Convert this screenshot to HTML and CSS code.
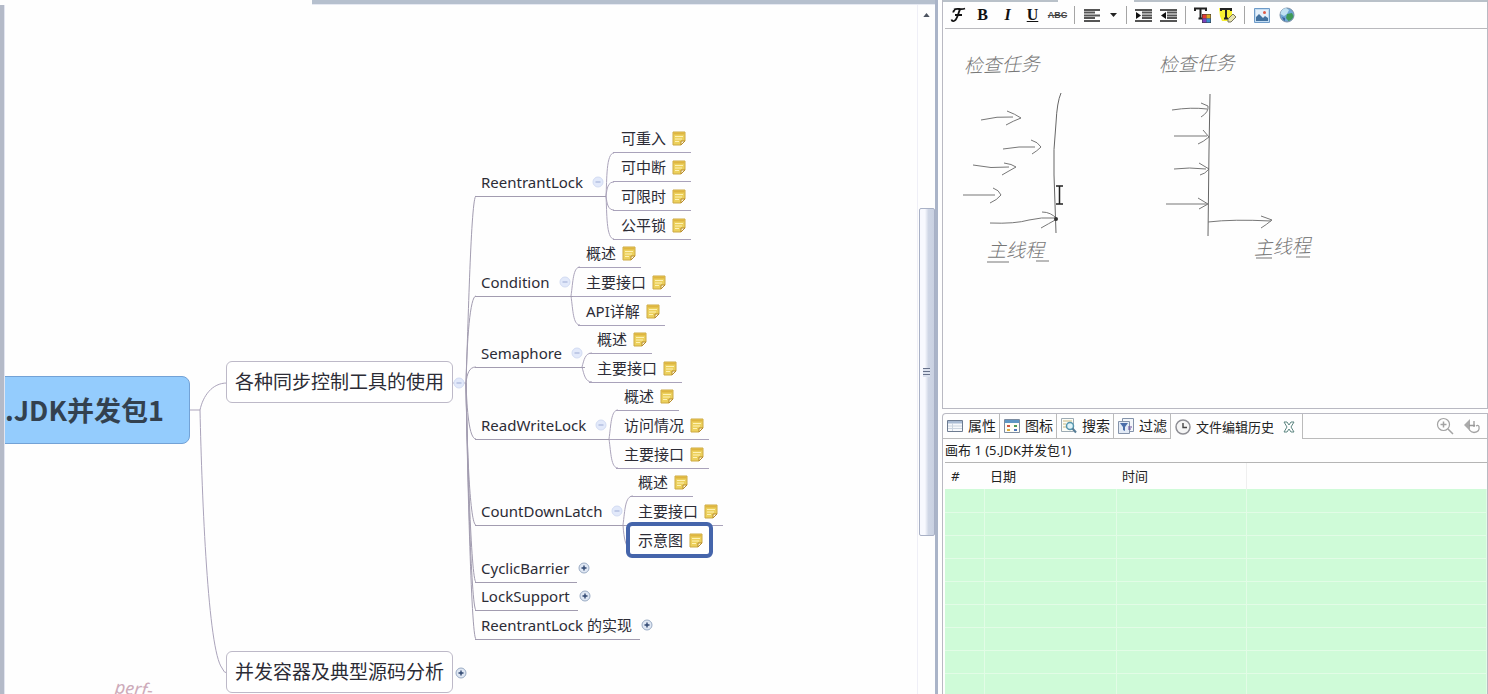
FILE: index.html
```html
<!DOCTYPE html>
<html lang="zh-CN">
<head>
<meta charset="utf-8">
<title>JDK并发包1</title>
<link rel="stylesheet" href="styles.css">
</head>
<body>
<svg class="defs" aria-hidden="true">
  <symbol id="note" viewBox="0 0 14 15">
    <path d="M1 1h12v9l-4 4H1z" fill="#ecd05c" stroke="#cdaa45"/>
    <path d="M1.500 1.500h11v2h-11z" fill="#deb540"/>
    <path d="M3 5.500h8M3 8h7M3 10.500h4" stroke="#fff2b4" fill="none"/>
    <path d="M13 10H9v4z" fill="#fff8d8" stroke="#b88c2c"/>
  </symbol>
  <symbol id="minus" viewBox="0 0 12 12">
    <circle cx="6" cy="6" r="5" fill="#e2e9fa" stroke="#d3dcf3"/>
    <path d="M3.500 6h5" stroke="#9dabd4"/>
  </symbol>
  <symbol id="plus" viewBox="0 0 12 12">
    <circle cx="6" cy="6" r="5" fill="#dfe7f3" stroke="#9aabc4"/>
    <path d="M3.500 6h5M6 3.500v5" stroke="#2f4670" stroke-width="1.400"/>
  </symbol>
</svg>
<div class="app">
  <main class="map">
    <div class="canvas">
      <svg class="wires" width="920" height="694" aria-hidden="true">
        <g class="thin">
          <path d="M189 410H200C203 396 212 383 227 383M200 410C202 500 208 650 222 668Q224 673 227 673"/>
          <path d="M453 383H466"/>
          <path d="M606 196C607 180 606 153 614 153M606 196C607 188 608 182 614 182M606 196C607 204 608 210 614 210M606 196C607 212 606 239 614 239"/>
          <path d="M571 296C573 282 573 267 580 267M571 296.500H580M571 296C573 310 573 325 580 325"/>
          <path d="M582 367C584 360 585 353 592 353M582 367C584 374 585 382 592 382"/>
          <path d="M609 439C611 425 611 410 618 410M609 439.500H618M609 439C611 453 611 468 618 468"/>
          <path d="M623 525C625 510 625 496 633 496M623 525.500H633M623 525C624 540 626 545 628 547"/>
        </g>
        <g class="trunk">
          <path d="M466 383C468 330 471 196 476 196M466 383C467 340 470 296 476 296M466 383C467 374 469 367 476 367M466 383C467 410 469 439 476 439M466 383C467 450 470 525 476 525M466 383C467 440 471 582 476 582M466 383C467 450 471 610 476 610M466 383C467 450 471 639 476 639"/>
        </g>
      </svg>

      <h1 class="root">.JDK并发包1</h1>
      <div class="topic tools">各种同步控制工具的使用</div>
      <button class="toggle t-tools" aria-label="折叠"><svg><use href="#minus"/></svg></button>
      <div class="topic containers">并发容器及典型源码分析</div>
      <button class="toggle t-containers" aria-label="展开"><svg><use href="#plus"/></svg></button>

      <div class="branch reentrant">ReentrantLock<button class="toggle" aria-label="折叠"><svg><use href="#minus"/></svg></button></div>
      <ul class="leaves reentrant-leaves">
        <li>可重入<svg><use href="#note"/></svg></li>
        <li>可中断<svg><use href="#note"/></svg></li>
        <li>可限时<svg><use href="#note"/></svg></li>
        <li>公平锁<svg><use href="#note"/></svg></li>
      </ul>

      <div class="branch condition">Condition<button class="toggle" aria-label="折叠"><svg><use href="#minus"/></svg></button></div>
      <ul class="leaves condition-leaves">
        <li>概述<svg><use href="#note"/></svg></li>
        <li>主要接口<svg><use href="#note"/></svg></li>
        <li>API详解<svg><use href="#note"/></svg></li>
      </ul>

      <div class="branch semaphore">Semaphore<button class="toggle" aria-label="折叠"><svg><use href="#minus"/></svg></button></div>
      <ul class="leaves semaphore-leaves">
        <li>概述<svg><use href="#note"/></svg></li>
        <li>主要接口<svg><use href="#note"/></svg></li>
      </ul>

      <div class="branch readwrite">ReadWriteLock<button class="toggle" aria-label="折叠"><svg><use href="#minus"/></svg></button></div>
      <ul class="leaves readwrite-leaves">
        <li>概述<svg><use href="#note"/></svg></li>
        <li>访问情况<svg><use href="#note"/></svg></li>
        <li>主要接口<svg><use href="#note"/></svg></li>
      </ul>

      <div class="branch countdown">CountDownLatch<button class="toggle" aria-label="折叠"><svg><use href="#minus"/></svg></button></div>
      <ul class="leaves countdown-leaves">
        <li>概述<svg><use href="#note"/></svg></li>
        <li>主要接口<svg><use href="#note"/></svg></li>
        <li class="selected">示意图<svg><use href="#note"/></svg></li>
      </ul>

      <div class="branch closed cyclic">CyclicBarrier<button class="toggle" aria-label="展开"><svg><use href="#plus"/></svg></button></div>
      <div class="branch closed support">LockSupport<button class="toggle" aria-label="展开"><svg><use href="#plus"/></svg></button></div>
      <div class="branch closed impl">ReentrantLock 的实现<button class="toggle" aria-label="展开"><svg><use href="#plus"/></svg></button></div>

      <span class="floating">perf-</span>
    </div>
    <div class="scrollbar">
      <svg class="up" viewBox="0 0 8 5"><path d="M0 5l4-5 4 5z" fill="#4c5360"/></svg>
      <div class="thumb"><i></i></div>
    </div>
  </main>

  <aside class="side">
    <section class="notes">
      <div class="edge"><i></i><i></i></div>
      <div class="toolbar">
        <button class="script" aria-label="字体"><svg width="16" height="16" viewBox="0 0 16 16"><path d="M4 2.500C7 1 11 3 15 1.500M10 2.500C8 6 7.500 13 4 14Q2 14.500 1.500 12.500M5 8h7M5 3Q3 4 3.500 5.500" fill="none" stroke="#111" stroke-width="1.800"/></svg></button>
        <button class="bold">B</button>
        <button class="italic">I</button>
        <button class="under">U</button>
        <button class="strike">ABC</button>
        <span class="sep"></span>
        <button aria-label="对齐"><svg width="16" height="13" viewBox="0 0 16 13"><path d="M0 1h16M0 3.500h11M0 6.500h16M0 9h11M0 12h16" stroke="#555" stroke-width="2"/></svg></button>
        <button class="caret" aria-label="对齐方式"><svg width="7" height="4" viewBox="0 0 7 4"><path d="M0 0h7L3.500 4z" fill="#222"/></svg></button>
        <span class="sep"></span>
        <button aria-label="增加缩进"><svg width="17" height="13" viewBox="0 0 17 13"><path d="M0 1h17M7 3.500h10M7 6.500h10M7 9h10M0 12h17" stroke="#555" stroke-width="2"/><path d="M1 3l5 3.500L1 10z" fill="#111"/></svg></button>
        <button aria-label="减少缩进"><svg width="17" height="13" viewBox="0 0 17 13"><path d="M0 1h17M7 3.500h10M7 6.500h10M7 9h10M0 12h17" stroke="#555" stroke-width="2"/><path d="M6 3L1 6.500 6 10z" fill="#111"/></svg></button>
        <span class="sep"></span>
        <button aria-label="文字颜色"><svg width="18" height="17" viewBox="0 0 18 17"><path d="M1 4V1.500h11V4M6.500 1.500v10M4.500 11.500h4" fill="none" stroke="#222" stroke-width="2"/><path d="M8 7h9v9H8z" fill="#333"/><path d="M8.500 7.500h4v4h-4z" fill="#e33b35"/><path d="M12.500 7.500h4v4h-4z" fill="#d9a925"/><path d="M8.500 11.500h4v4h-4z" fill="#7b43bd"/><path d="M12.500 11.500h4v4h-4z" fill="#3b8fd0"/></svg></button>
        <button aria-label="背景颜色"><svg width="18" height="17" viewBox="0 0 18 17"><path d="M0 1h13v7l-4 6H3L1 9z" fill="#f7f032"/><path d="M2 4V2h10v2M7 2v9M5 11.500h4" fill="none" stroke="#222" stroke-width="2"/><path d="M9 12l5-5 3 3-5 5H9z" fill="#e7e3b0" stroke="#77745c"/></svg></button>
        <span class="sep"></span>
        <button aria-label="图片"><svg width="16" height="15" viewBox="0 0 16 15"><path d="M.500.500h15v14H.500z" fill="#c3dcf2" stroke="#6e9bc8"/><path d="M2 2h12v11H2z" fill="#e4f0fb"/><path d="M2 13V9l3-3 4 4 2-2 3 2v3z" fill="#42719f"/><circle cx="10.500" cy="4.500" r="1.500" fill="#e05a48"/></svg></button>
        <button aria-label="链接"><svg width="16" height="16" viewBox="0 0 16 16"><circle cx="8" cy="8" r="7" fill="#6ea5d4" stroke="#7b8fa6"/><path d="M7 1q-5 1-5.500 6L5 9l3-2 2-4z" fill="#bfe0f2"/><path d="M8 7l5-1 1.500 3q-1 4-5 5L7 11z" fill="#3f9a57"/><path d="M3 10l3 1v3q-2-1-3-4z" fill="#3a62a0"/></svg></button>
      </div>
      <div class="editor">
        <svg class="sketch" width="400" height="270" role="img" aria-label="检查任务与主线程示意图">
          <g class="ink">
            <path d="M38 91Q54 87 70 88M64 82Q72 85 78 89Q70 92 63 96"/>
            <path d="M60 120Q76 117 92 118M88 111Q95 113 98 118Q94 122 89 125"/>
            <path d="M30 136Q48 140 66 138M61 134Q69 135 73 138Q64 143 59 146"/>
            <path d="M20 166H52M50 159Q56 161 58 166Q54 171 47 174"/>
            <path d="M47 194Q72 195 86 191Q98 188 112 189M99 183Q108 183 114 190Q105 195 98 199"/>
            <path class="bar" d="M118 64Q114 73 113 94Q110 121 111 146L113 204"/>
            <path d="M229 81Q248 78 264 80M258 74L265 77Q266 83 258 88"/>
            <path d="M231 107H264M260 101L266 108Q260 113 255 115"/>
            <path d="M231 140Q246 138 263 140M256 134L266 140Q262 145 257 146"/>
            <path d="M223 175H264M255 169L265 175L256 180"/>
            <path class="bar" d="M267 65L266 121L265 207"/>
            <path d="M265 193Q290 190 328 192M318 187L329 191Q323 196 318 199"/>
            <path d="M44 233H66M93 232H106"/>
            <path d="M313 229H329M353 228H367"/>
          </g>
          <circle cx="113" cy="190" r="2" fill="#333"/>
          <path d="M113 157h7M116.500 157v18M113 175h7" fill="none" stroke="#222" stroke-width="1.500"/>
          <g class="hand">
            <text x="21" y="44" transform="rotate(-2 21 44)">检查任务</text>
            <text x="216" y="43" transform="rotate(-2 216 43)">检查任务</text>
            <text x="44" y="228">主线程</text>
            <text x="311" y="226" transform="rotate(-3 311 226)">主线程</text>
          </g>
        </svg>
      </div>
    </section>

    <section class="views">
      <div class="tabs">
        <button class="tab"><svg width="16" height="14" viewBox="0 0 16 14"><path d="M.500 1.500h15v11H.500z" fill="#f7f9fc" stroke="#6d7b90"/><path d="M1 2h14v2.500H1z" fill="#a9bbd3"/><path d="M5.500 4v8M1 7h14M1 9.500h14" stroke="#ccd5e0"/></svg>属性</button>
        <button class="tab"><svg width="16" height="14" viewBox="0 0 16 14"><path d="M.500.500h15v13H.500z" fill="#fffef6" stroke="#7d8ca0"/><path d="M1 1h14v3H1z" fill="#5f97c4"/><path d="M3 6h3v2H3z" fill="#cf5744"/><path d="M10 6h3v2h-3z" fill="#4c9a58"/><path d="M3 10h3v2H3z" fill="#deb03e"/><path d="M10 10h3v2h-3z" fill="#4b76bd"/></svg>图标</button>
        <button class="tab"><svg width="16" height="16" viewBox="0 0 16 16"><path d="M.500.500h12v13H.500z" fill="#fdfdf6" stroke="#9dabb4"/><path d="M2 3h9M2 6h3M2 9h3" stroke="#c6b77e"/><circle cx="9" cy="8" r="3.500" fill="#dff3f8" stroke="#5596ad" stroke-width="1.500"/><path d="M11.500 10.500L15 14.500" stroke="#577d96" stroke-width="2"/></svg>搜索</button>
        <button class="tab"><svg width="16" height="16" viewBox="0 0 16 16"><path d="M4.500.500h11v13h-11z" fill="#f3f6fa" stroke="#8493aa"/><path d="M.500 3.500h11v12H.500z" fill="#e3ebf6" stroke="#8493aa"/><path d="M2 5h8L7 9v4l-2-1V9z" fill="#4a6da9"/><path d="M10 9h4M10 11h3" stroke="#6a4c9b"/></svg>过滤</button>
        <button class="tab active"><svg width="16" height="16" viewBox="0 0 16 16"><circle cx="8" cy="8" r="7" fill="#f5f5f5" stroke="#8e8e94" stroke-width="1.500"/><path d="M8 4v4.500h4" fill="none" stroke="#444" stroke-width="1.400"/></svg>文件编辑历史<svg class="close" width="12" height="12" viewBox="0 0 12 12"><path d="M1 1h3l2 3 2-3h3L8 6l3 5H8L6 8l-2 3H1l3-5z" fill="#fff" stroke="#5d8580"/></svg></button>
        <div class="tools-right">
          <button aria-label="放大"><svg width="18" height="18" viewBox="0 0 18 18"><circle cx="7.500" cy="7.500" r="6" fill="#fff" stroke="#a3a3a3" stroke-width="1.200"/><path d="M4.500 7.500h6M7.500 4.500v6M12 12l5 5" stroke="#a3a3a3" stroke-width="1.500"/></svg></button>
          <button aria-label="恢复"><svg width="18" height="16" viewBox="0 0 18 16"><path d="M7 6h-1M6 6.500Q5 14 11 14.500Q17 14 16 8.500Q15 6.500 13 8" fill="#fff" stroke="#a3a3a3" stroke-width="1.300"/><path d="M1 7l6-6v12z" fill="#aaa"/><path d="M6 7.500h6M11 3v6" fill="none" stroke="#999" stroke-width="1.300"/></svg></button>
        </div>
      </div>
      <p class="caption">画布 1 (5.JDK并发包1)</p>
      <table class="history">
        <colgroup><col class="c-num"><col class="c-date"><col class="c-time"><col></colgroup>
        <thead><tr><th class="num">#</th><th>日期</th><th>时间</th><th></th></tr></thead>
        <tbody>
          <tr><td></td><td></td><td></td><td></td></tr>
          <tr><td></td><td></td><td></td><td></td></tr>
          <tr><td></td><td></td><td></td><td></td></tr>
          <tr><td></td><td></td><td></td><td></td></tr>
          <tr><td></td><td></td><td></td><td></td></tr>
          <tr><td></td><td></td><td></td><td></td></tr>
          <tr><td></td><td></td><td></td><td></td></tr>
          <tr><td></td><td></td><td></td><td></td></tr>
          <tr><td></td><td></td><td></td><td></td></tr>
        </tbody>
      </table>
    </section>
  </aside>
</div>
</body>
</html>
```
FILE: styles.css
```css
* { box-sizing: border-box; }
body {
  margin: 0;
  background: #fefefe;
  color: #2c2c36;
  font: 13px/18px "Noto Sans", "Noto Sans CJK SC", sans-serif;
}
button {
  padding: 0;
  border: 0;
  background: none;
  color: inherit;
  font: inherit;
}
.defs { position: absolute; width: 0; height: 0; }
.app {
  display: grid;
  grid-template-columns: minmax(0, 1fr) 546px;
  column-gap: 4px;
  height: 100vh;
  overflow: hidden;
}

/* Mind map */
.map {
  position: relative;
  display: grid;
  grid-template-columns: minmax(0, 1fr) 18px;
  overflow: hidden;
  border-right: 3px solid #aab4c8;
}
.map::before {
  content: "";
  position: absolute;
  top: 5px;
  bottom: 0;
  left: 0;
  z-index: 1;
  width: 4px;
  border-right: 1px solid #e2e5f0;
  background: #b4bac8;
}
.map::after {
  content: "";
  position: absolute;
  top: 0;
  left: 312px;
  right: 0;
  height: 4px;
  border-bottom: 1px solid #e6e9f2;
  background: #b6c0ce;
}
.canvas { position: relative; overflow: hidden; }
.wires { position: absolute; top: 0; left: 0; fill: none; }
.thin { stroke: #aba4bb; }
.trunk { stroke: #a29cb0; }
.root {
  position: absolute;
  top: 376px;
  left: 0;
  width: 190px;
  margin: 0;
  padding-left: 4px;
  border: 1px solid #73a2d6;
  border-radius: 0 8px 8px 0;
  background: #94ccfd;
  color: #33414f;
  font-family: "Noto Sans CJK SC", sans-serif;
  font-size: 27px;
  line-height: 66px;
  white-space: nowrap;
}
.topic {
  position: absolute;
  left: 226px;
  padding: 0 8px;
  border: 1px solid #bdb9c8;
  border-radius: 6px;
  background: #fff;
  font-size: 19px;
  line-height: 40px;
  white-space: nowrap;
}
.tools { top: 361px; }
.containers { top: 651px; }
.toggle { display: block; width: 12px; height: 12px; }
.toggle svg { display: block; width: 12px; height: 12px; }
.t-tools { position: absolute; top: 377px; left: 453px; }
.t-containers { position: absolute; top: 667px; left: 455px; }
.branch {
  position: absolute;
  left: 475px;
  display: flex;
  align-items: center;
  gap: 9px;
  height: 28px;
  padding: 0 2px 2px 6px;
  border-bottom: 1px solid #a29cb0;
  font-size: 15px;
  white-space: nowrap;
}
.branch.closed { padding-right: 8px; }
.closed .toggle { position: absolute; left: 100%; margin-left: 1px; }
.reentrant { top: 169px; }
.condition { top: 269px; }
.semaphore { top: 340px; }
.readwrite { top: 412px; }
.countdown { top: 498px; }
.cyclic { top: 555px; }
.support { top: 583px; }
.impl { top: 612px; }
.leaves {
  position: absolute;
  display: flex;
  flex-direction: column;
  align-items: flex-start;
  margin: 0;
  padding: 0;
  list-style: none;
  font-size: 15px;
}
.leaves li {
  display: flex;
  align-items: center;
  gap: 6px;
  height: 29px;
  padding: 0 5px 0 8px;
  border-bottom: 1px solid #a9a2ba;
  white-space: nowrap;
}
.leaves svg { width: 14px; height: 15px; }
.reentrant-leaves { top: 124px; left: 613px; }
.condition-leaves { top: 239px; left: 578px; }
.semaphore-leaves { top: 325px; left: 589px; }
.readwrite-leaves { top: 382px; left: 616px; }
.countdown-leaves { top: 468px; left: 630px; }
.leaves .selected {
  height: 36px;
  margin: -4px 0 0 -4px;
  padding: 0 6px 0 8px;
  border: 4px solid #4565ab;
  border-radius: 6px;
  background: #fff;
}
.floating {
  position: absolute;
  top: 679px;
  left: 115px;
  color: #cdabba;
  font-size: 18px;
  font-style: italic;
  transform: rotate(5deg);
}
.scrollbar {
  display: flex;
  flex-direction: column;
  align-items: center;
  border-left: 1px solid #efeff7;
}
.up { width: 7px; height: 4px; margin: 13px 0 191px; flex: none; }
.thumb {
  display: grid;
  place-items: center;
  width: 16px;
  height: 328px;
  border: 1px solid #a9b1c6;
  border-radius: 2px;
  background: linear-gradient(90deg, #f8f9fe 35%, #cfd6e5 60%, #c9d1e1);
}
.thumb i {
  width: 7px;
  height: 9px;
  background: repeating-linear-gradient(#67718a 0 1px, #dbe1ee 1px 3px);
}

/* Notes */
.side {
  display: grid;
  grid-template-rows: 409px minmax(0, 1fr);
  row-gap: 4px;
  min-width: 0;
}
.notes {
  display: flex;
  flex-direction: column;
  border: solid #b9b9c2;
  border-width: 0 1px 1px;
}
.edge { display: flex; justify-content: space-between; height: 2px; }
.edge i { width: 115px; background: #b9c1c9; }
.edge i:last-child { width: 353px; }
.toolbar {
  display: flex;
  align-items: center;
  height: 27px;
  margin-left: 2px;
  border-bottom: 1px solid #b9b9bd;
}
.toolbar button {
  display: grid;
  place-items: center;
  width: 25px;
  height: 24px;
  color: #111;
  font: 700 16px/20px "Liberation Serif", serif;
}
.toolbar .italic { font-style: italic; }
.toolbar .under { text-decoration: underline; }
.toolbar .strike { color: #444; font: 700 9px/12px "Liberation Sans", sans-serif; text-decoration: line-through; }
.toolbar .caret { width: 18px; }
.sep { width: 1px; height: 18px; margin: 0 4px; background: #a5a5a5; }
.editor { flex: 1; overflow: hidden; background: #fefefe; }
.sketch { display: block; }
.ink { fill: none; stroke: #777; }
.ink .bar { stroke: #666; }
.hand {
  fill: #777;
  font: italic 300 19px "Noto Sans CJK SC", sans-serif;
}

/* Views */
.views {
  overflow: hidden;
  border: 1px solid #b9b9c2;
  border-bottom: 0;
  border-radius: 4px 0 0 0;
}
.tabs { display: flex; height: 25px; color: #222; font-size: 14px; }
.tab {
  display: flex;
  align-items: center;
  gap: 5px;
  padding: 0 3px 0 4px;
  border: solid #bbb;
  border-width: 0 1px 1px 0;
  white-space: nowrap;
}
.tab.active { padding-right: 7px; border-bottom: 0; font-size: 13px; }
.close { margin-left: 4px; }
.tools-right {
  display: flex;
  flex: 1;
  align-items: center;
  justify-content: flex-end;
  gap: 9px;
  padding-right: 6px;
  border-bottom: 1px solid #bbb;
}
.tools-right button, .tools-right svg { display: block; }
.caption {
  height: 24px;
  margin: 0 0 0 2px;
  padding-top: 2px;
  border-bottom: 1px solid #b5b5b5;
  color: #222;
}
.history {
  width: calc(100% - 2px);
  margin-left: 2px;
  border-collapse: collapse;
  table-layout: fixed;
  color: #222;
}
.c-num { width: 39px; }
.c-date { width: 132px; }
.c-time { width: 130px; }
.history th { height: 26px; padding: 0 6px; font-weight: 400; text-align: left; }
.history .num { font-style: italic; }
.history th:last-child { border-left: 1px solid #efefef; }
.history td {
  height: 23px;
  padding: 0;
  border: solid #e2fce6;
  border-width: 0 1px 1px 0;
  background: #cffbd8;
}
```
